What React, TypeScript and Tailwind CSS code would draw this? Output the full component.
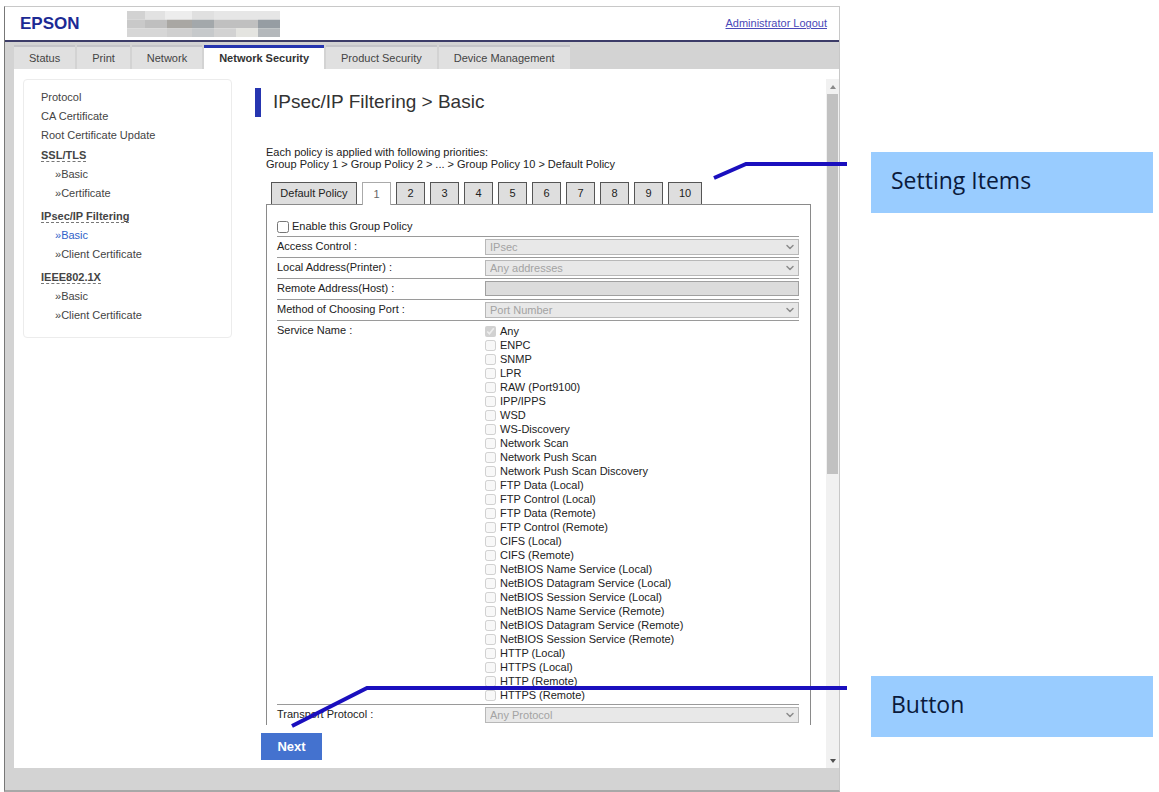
import React, { useState } from 'react';
import { ChevronDown } from 'lucide-react';
import clsx from 'clsx';

const MAIN_TABS = ['Status', 'Print', 'Network', 'Network Security', 'Product Security', 'Device Management'];

const TOP_LINKS = ['Protocol', 'CA Certificate', 'Root Certificate Update'];

const LINK_GROUPS = [
    { title: 'SSL/TLS', items: ['Basic', 'Certificate'] },
    { title: 'IPsec/IP Filtering', items: ['Basic', 'Client Certificate'] },
    { title: 'IEEE802.1X', items: ['Basic', 'Client Certificate'] },
];

const POLICY_TABS = ['Default Policy', '1', '2', '3', '4', '5', '6', '7', '8', '9', '10'];

const SERVICES = [
    'Any',
    'ENPC',
    'SNMP',
    'LPR',
    'RAW (Port9100)',
    'IPP/IPPS',
    'WSD',
    'WS-Discovery',
    'Network Scan',
    'Network Push Scan',
    'Network Push Scan Discovery',
    'FTP Data (Local)',
    'FTP Control (Local)',
    'FTP Data (Remote)',
    'FTP Control (Remote)',
    'CIFS (Local)',
    'CIFS (Remote)',
    'NetBIOS Name Service (Local)',
    'NetBIOS Datagram Service (Local)',
    'NetBIOS Session Service (Local)',
    'NetBIOS Name Service (Remote)',
    'NetBIOS Datagram Service (Remote)',
    'NetBIOS Session Service (Remote)',
    'HTTP (Local)',
    'HTTPS (Local)',
    'HTTP (Remote)',
    'HTTPS (Remote)',
];

// Masked model name, as rows of [x, width, color]
const MASK_ROWS: [number, number, string][][] = [
    [[0, 18, '#d2d2d2'], [18, 20, '#e2e2e2'], [38, 27, '#ededed'], [65, 22, '#e0e0e0'], [87, 66, '#e6e6e6']],
    [[0, 18, '#c9c9c9'], [18, 22, '#bfbfbf'], [40, 25, '#a9a7a3'], [65, 22, '#a3a8ab'], [87, 44, '#c0c0c0'], [131, 22, '#969da3']],
    [[0, 40, '#d6d6d6'], [40, 25, '#cfcfcf'], [65, 22, '#c6c9cb'], [87, 22, '#d2d2d2'], [109, 22, '#e4e4e0'], [131, 22, '#b4b8bb']],
];

const MaskedName = () => (
    <svg width="153" height="26" viewBox="0 0 153 26" aria-hidden="true">
        {MASK_ROWS.map((row, y) =>
            row.map(([x, w, fill]) => <rect key={`${y}-${x}`} x={x} y={y * 8.7} width={w} height={8.7} fill={fill} />)
        )}
    </svg>
);

const Header = () => (
    <header className="flex h-[35px] items-center justify-between border-b-2 border-[#3c3c68] bg-white pr-3 pl-[15px]">
        <div className="flex items-center gap-[47px]">
            <span className="w-[60px] text-[17px] leading-5 font-bold text-[#1c2a94]">EPSON</span>
            <MaskedName />
        </div>
        <a href="#logout" className="text-[11px] text-[#4a48b8] underline">Administrator Logout</a>
    </header>
);

const MainNav = () => (
    <nav className="flex h-[27px] items-end gap-0.5 bg-[#d3d3d3] pl-[9px]">
        {MAIN_TABS.map((tab) => {
            const active = tab === 'Network Security';
            return (
                <a
                    key={tab}
                    href="#tab"
                    className={clsx(
                        'flex h-6 items-center px-[15px] text-[11px]',
                        active
                            ? 'border-t-3 border-[#2635b0] bg-white font-bold text-[#333]'
                            : 'border-t-2 border-[#c4c4c8] bg-[#e0e0e0] text-[#444]'
                    )}
                >
                    {tab}
                </a>
            );
        })}
    </nav>
);

const SideMenu = () => (
    <nav className="w-[209px] shrink-0 self-start rounded-sm border border-[#ececec] px-[17px] pt-2 pb-2 text-[11px] leading-[19px] text-[#444]">
        <ul className="mb-px">
            {TOP_LINKS.map((link) => (
                <li key={link}><a href="#menu">{link}</a></li>
            ))}
        </ul>
        {LINK_GROUPS.map((group) => (
            <div key={group.title} className="mb-1">
                <h3 className="font-bold">
                    <span className="border-b border-dashed border-[#777]">{group.title}</span>
                </h3>
                <ul className="pl-[14px]">
                    {group.items.map((item) => (
                        <li key={item}>
                            <a
                                href="#menu"
                                className={clsx(group.title === 'IPsec/IP Filtering' && item === 'Basic' && 'text-[#2f62c9]')}
                            >
                                »{item}
                            </a>
                        </li>
                    ))}
                </ul>
            </div>
        ))}
    </nav>
);

interface FieldRowProps {
    id: string;
    label: string;
    children: React.ReactNode;
}

const FieldRow: React.FC<FieldRowProps> = ({ id, label, children }) => (
    <div className="flex h-[21px] border-t border-[#9a9a9a] pt-0.5">
        <label htmlFor={id} className="w-52 shrink-0 leading-[14px]">{label}</label>
        {children}
    </div>
);

const SelectField: React.FC<{ id: string; value: string }> = ({ id, value }) => (
    <div className="relative flex-1">
        <select
            id={id}
            disabled
            className="block h-4 w-full appearance-none border border-[#b8b8b8] bg-[#e8e8e8] px-1 text-[11px] leading-[14px] text-[#a3a3a3]"
        >
            <option>{value}</option>
        </select>
        <ChevronDown className="absolute top-0.5 right-[3px] text-[#8c8c8c]" size={12} strokeWidth={3} />
    </div>
);

const PolicyForm = () => {
    const [enabled, setEnabled] = useState(false);

    return (
        <div className="border border-b-0 border-[#8a8a8a] pt-3 pr-[11px] pl-[10px]">
            <div className="flex h-[19px] items-center gap-[3px]">
                <input
                    id="enable"
                    type="checkbox"
                    className="size-3"
                    checked={enabled}
                    onChange={(e) => setEnabled(e.target.checked)}
                />
                <label htmlFor="enable">Enable this Group Policy</label>
            </div>
            <FieldRow id="access" label="Access Control :">
                <SelectField id="access" value="IPsec" />
            </FieldRow>
            <FieldRow id="local" label="Local Address(Printer) :">
                <SelectField id="local" value="Any addresses" />
            </FieldRow>
            <FieldRow id="remote" label="Remote Address(Host) :">
                <input id="remote" type="text" disabled className="h-[15px] flex-1 border border-[#a0a0a0] bg-[#dcdcdc]" />
            </FieldRow>
            <FieldRow id="method" label="Method of Choosing Port :">
                <SelectField id="method" value="Port Number" />
            </FieldRow>
            <div role="group" aria-labelledby="service" className="flex border-t border-[#9a9a9a] pt-[3px] pb-0.5">
                <span id="service" className="w-52 shrink-0 leading-3">Service Name :</span>
                <ul>
                    {SERVICES.map((name, i) => (
                        <li key={name} className="flex h-[14px] items-center gap-1">
                            <input id={`service-${i}`} type="checkbox" disabled defaultChecked={i === 0} className="size-[11px]" />
                            <label htmlFor={`service-${i}`}>{name}</label>
                        </li>
                    ))}
                </ul>
            </div>
            <FieldRow id="transport" label="Transport Protocol :">
                <SelectField id="transport" value="Any Protocol" />
            </FieldRow>
        </div>
    );
};

const PolicyTabs = () => (
    <div className="flex gap-[5px] pl-[5px]">
        {POLICY_TABS.map((tab) => {
            const active = tab === '1';
            return (
                <button
                    key={tab}
                    type="button"
                    className={clsx(
                        'border-x border-t text-center',
                        tab === 'Default Policy' ? 'w-[86px]' : tab === '10' ? 'w-[34px]' : 'w-[29px]',
                        active ? 'relative -mb-px h-[23px] border-[#aaa] bg-white text-[#666]' : 'h-[22px] border-[#555] bg-[#dedede]'
                    )}
                >
                    {tab}
                </button>
            );
        })}
    </div>
);

const ScrollBar = () => (
    <div className="flex w-[13px] shrink-0 flex-col items-center bg-[#f1f1f1]" aria-hidden="true">
        <svg width="12" height="15" viewBox="0 0 12 15"><path d="M6 6l3 4H3z" fill="#8a8a8a" /></svg>
        <div className="h-[380px] w-[11px] bg-[#c1c1c1]" />
        <svg className="mt-auto" width="12" height="15" viewBox="0 0 12 15"><path d="M6 10l3-4H3z" fill="#505050" /></svg>
    </div>
);

interface CalloutProps {
    text: string;
    /** Leader line, drawn to the left of the box */
    width: number;
    height: number;
    points: string;
}

const Callout: React.FC<CalloutProps> = ({ text, width, height, points }) => (
    <div className="relative flex h-[61px] items-center bg-[#99ccff] px-5 pb-1 font-['Open_Sans',sans-serif] text-[23px] text-[#0a1a3c]">
        {text}
        <svg
            className="pointer-events-none absolute top-[9px] right-full mr-6"
            width={width}
            height={height}
            viewBox={`0 0 ${width} ${height}`}
            aria-hidden="true"
        >
            <polyline points={points} fill="none" stroke="#1a0fbe" strokeWidth="4" />
        </svg>
    </div>
);

const App = () => (
    <div className="flex min-h-screen bg-white pl-1 font-['Liberation_Sans',Arial,sans-serif] text-[11px] text-[#222]">
        <div className="mt-1.5 flex min-w-0 flex-1 flex-col border border-b-2 border-t-[#c8c8c8] border-r-[#c8c8c8] border-b-[#a8a8a8] border-l-[#777] bg-[#d3d3d3]">
            <Header />
            <MainNav />
            <main className="ml-[9px] flex flex-1 bg-white pt-[10px] pl-[9px]">
                <SideMenu />
                <div className="ml-[23px] flex min-w-0 flex-1 flex-col pt-[9px]">
                    <h1 className="flex h-[29px] items-center gap-3 text-[19px] text-[#333]">
                        <span className="h-full w-1.5 bg-[#2635b0]" />
                        IPsec/IP Filtering &gt; Basic
                    </h1>
                    <div className="mt-[29px] mr-[15px] ml-[11px]">
                        <p className="leading-3">
                            Each policy is applied with following priorities:
                            <br />
                            Group Policy 1 &gt; Group Policy 2 &gt; ... &gt; Group Policy 10 &gt; Default Policy
                        </p>
                        <div className="mt-3">
                            <PolicyTabs />
                            <PolicyForm />
                        </div>
                    </div>
                    <div className="pt-2 pb-2 pl-1.5">
                        <button type="button" className="h-[27px] w-[61px] bg-[#4472cf] text-[13px] font-bold text-white">Next</button>
                    </div>
                </div>
                <ScrollBar />
            </main>
            <footer className="h-[22px]" />
        </div>
        <aside className="flex w-[319px] shrink-0 flex-col gap-[463px] pt-[152px] pr-1.5 pl-[31px]">
            <Callout text="Setting Items" width={134} height={20} points="1,17 33,3 134,3" />
            <Callout text="Button" width={556} height={44} points="1,41 76,3 556,3" />
        </aside>
    </div>
);

export default App;
